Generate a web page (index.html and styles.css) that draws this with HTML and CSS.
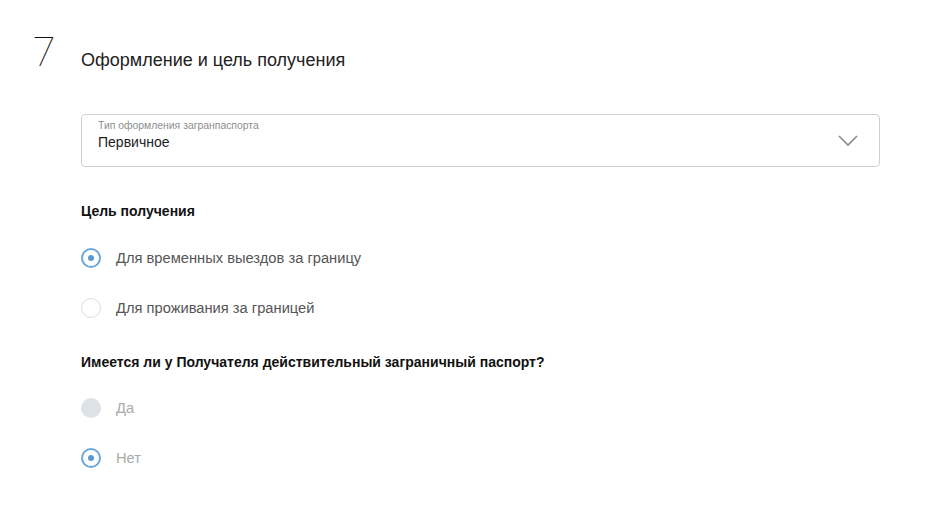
FILE: index.html
```html
<!DOCTYPE html>
<html lang="ru">
<head>
  <meta charset="UTF-8">
  <title>Оформление и цель получения</title>
  <link rel="stylesheet" href="styles.css">
</head>
<body>
  <section class="step">
    <div class="step-num">7</div>
    <div class="step-body">
      <h2 class="step-title">Оформление и цель получения</h2>

      <div class="select">
        <div class="select-text">
          <span class="select-label">Тип оформления загранпаспорта</span>
          <span class="select-value">Первичное</span>
        </div>
        <svg class="chevron" width="20" height="12" viewBox="0 0 20 12">
          <polyline points="1,1 10,10 19,1" fill="none" stroke="#8a8a8a" stroke-width="1.6"/>
        </svg>
      </div>

      <h3 class="group-title">Цель получения</h3>
      <ul class="radios">
        <li class="radio checked"><span class="dot"></span>Для временных выездов за границу</li>
        <li class="radio"><span class="dot"></span>Для проживания за границей</li>
      </ul>

      <h3 class="group-title">Имеется ли у Получателя действительный заграничный паспорт?</h3>
      <ul class="radios muted">
        <li class="radio disabled"><span class="dot"></span>Да</li>
        <li class="radio checked"><span class="dot"></span>Нет</li>
      </ul>
    </div>
  </section>
</body>
</html>
```

FILE: styles.css
```css
* {
  box-sizing: border-box;
  margin: 0; padding: 0;
}
body {
  background: #fff;
  font-family: "Liberation Sans", Arial, sans-serif;
  color: #222;
}
.step {
  display: flex;
  padding: 30px 0 0 33px;
  width: 880px;
}
.step-num {
  font-family: Roboto, "Liberation Sans", sans-serif;
  font-weight: 100;
  font-size: 41px;
  line-height: 44px;
  color: #111;
  width: 48px;
}
.step-body {
  flex: 1;
}
.step-title {
  font-weight: normal;
  font-size: 18px;
  line-height: 22px;
  margin-top: 19px;
  color: #222;
}
.select {
  display: flex;
  align-items: center;
  justify-content: space-between;
  height: 53px;
  margin-top: 43px;
  border: 1px solid #cfcfcf;
  border-radius: 4px;
  padding: 0 21px 0 16px;
}
.select-text {
  display: flex;
  flex-direction: column;
  margin-top: -10px;
}
.select-label {
  font-size: 10.4px;
  color: #8e8e8e;
  line-height: 12px;
}
.select-value {
  font-size: 14px;
  color: #222;
  line-height: 18px;
  margin-top: 1px;
}
.chevron {
  margin-top: 1px;
}
.group-title {
  font-size: 14px;
  font-weight: bold;
  color: #111;
  line-height: 16px;
  margin-top: 36px;
}
.radios {
  list-style: none;
  margin-top: 29px;
  display: flex;
  flex-direction: column;
  gap: 30px;
}
.radios.muted {
  margin-top: 28px;
}
.radio {
  display: flex;
  align-items: center;
  height: 20px;
  font-size: 14.7px;
  color: #555;
}
.muted .radio {
  color: #aaa;
}
.dot {
  width: 20px;
  height: 20px;
  border-radius: 50%;
  border: 1px solid #dcdcdc;
  margin-right: 15px;
  flex-shrink: 0;
  display: flex;
  align-items: center;
  justify-content: center;
}
.radio.checked .dot {
  border: 2px solid #6fa6d8;
}
.radio.checked .dot::after {
  content: "";
  width: 6px;
  height: 6px;
  border-radius: 50%;
  background: #5b9ad2;
}
.radio.disabled .dot {
  border: none;
  background: #dde2e7;
}
```
